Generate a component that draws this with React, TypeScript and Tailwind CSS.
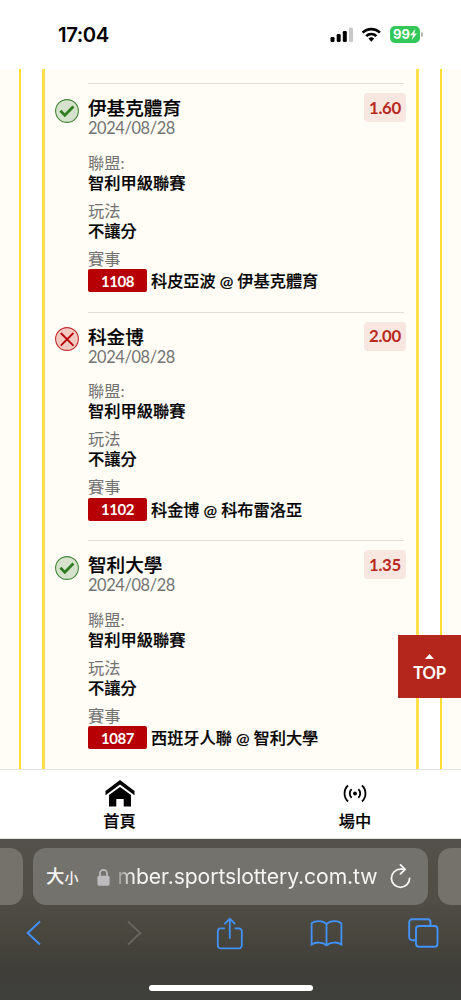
type Bet = {
  id: string;
  team: string;
  odds: string;
  match: [string, string];
  won: boolean;
};

const bets: Bet[] = [
  { id: "1108", team: "伊基克體育", odds: "1.60", match: ["科皮亞波", "伊基克體育"], won: true },
  { id: "1102", team: "科金博", odds: "2.00", match: ["科金博", "科布雷洛亞"], won: false },
  { id: "1087", team: "智利大學", odds: "1.35", match: ["西班牙人聯", "智利大學"], won: true },
];

function StatusBar() {
  return (
    <header className="flex h-[69px] shrink-0 items-start justify-between bg-white pl-[58px] pr-[38px] pt-[21px] font-['Inter',sans-serif]">
      <span className="text-[20.3px] font-semibold leading-[27px] tracking-[-0.4px] text-black">17:04</span>
      <div className="flex items-center pt-[3px]">
        <svg className="h-[20px] w-[24px]" viewBox="0 0 24 20">
          <rect x="0.5" y="13" width="4" height="5" rx="1.2" />
          <rect x="6.7" y="10" width="4" height="8" rx="1.2" />
          <rect x="12.8" y="7" width="4" height="11" rx="1.2" />
          <rect x="19" y="3.5" width="4" height="14.5" rx="1.2" fill="#c8c8c8" />
        </svg>
        <svg className="ml-[7px] h-[20px] w-[21px]" viewBox="0 0 21 20" fill="none" stroke="#000" strokeWidth="2.7">
          <path d="M1.7 8.6a12.3 12.3 0 0 1 17.2 0" />
          <path d="M5.2 12.1a7.3 7.3 0 0 1 10.2 0" />
          <path d="M7.4 14.6a4.2 4.2 0 0 1 5.8 0L10.3 17.7Z" fill="#000" stroke="none" />
        </svg>
        <div className="ml-[8px] flex h-[17px] w-[30px] items-center justify-center rounded-[5px] bg-[#34c759] text-[13px] font-bold leading-none text-white">
          99
          <svg className="h-[11px] w-[7px]" viewBox="0 0 7 11" fill="#fff">
            <path d="M5.5 0 0 6.2h3L1.7 11 7 4.5H4.2Z" />
          </svg>
        </div>
        <span className="ml-px h-[5px] w-[2px] rounded-r-full bg-[#b5b5b5]" />
      </div>
    </header>
  );
}

function ResultIcon({ won }: { won: boolean }) {
  return won ? (
    <svg className="h-6 w-6" viewBox="0 0 24 24" fill="none">
      <circle cx="12" cy="12" r="11.4" fill="#d6e3cc" stroke="#43853a" strokeWidth="1.1" />
      <path d="m5.4 11.8 4.4 4.4 8.6-8.8" stroke="#2f7d20" strokeWidth="2.8" />
    </svg>
  ) : (
    <svg className="h-6 w-6" viewBox="0 0 24 24" fill="none">
      <circle cx="12" cy="12" r="11.4" fill="#f3c9c2" stroke="#c22a2c" strokeWidth="1.1" />
      <path d="m5.8 6 12.6 12.6M18.4 6 5.8 18.6" stroke="#b90004" strokeWidth="1.8" />
    </svg>
  );
}

function BetItem({ bet }: { bet: Bet }) {
  return (
    <article className="flex h-[228.6px] shrink-0">
      <div className="w-[43px] shrink-0 pl-[10px] pt-[15.5px]">
        <ResultIcon won={bet.won} />
      </div>
      <div className="relative w-[316px] border-t border-[#e3e0dc] pt-[14px] text-[16.25px] leading-[20px] text-[#737373]">
        <h2 className="text-[18.6px] font-medium leading-[20px] text-black [-webkit-text-stroke:0.2px_black]">{bet.team}</h2>
        <p className="text-[16.4px] leading-[20px] tracking-[-0.4px]">2024/08/28</p>
        <dl>
          <dt className="mt-[14.5px]">聯盟:</dt>
          <dd className="font-medium text-black [-webkit-text-stroke:0.2px_black]">智利甲級聯賽</dd>
          <dt className="mt-[8px]">玩法</dt>
          <dd className="font-medium text-black [-webkit-text-stroke:0.2px_black]">不讓分</dd>
          <dt className="mt-[8px]">賽事</dt>
          <dd className="mt-[0.5px] flex items-center font-medium text-black">
            <span className="flex h-[23px] w-[59px] items-center justify-center rounded-[2px] bg-[#b60004] text-[15px] font-bold tracking-[-0.4px] text-white">
              {bet.id}
            </span>
            <span className="ml-[4px] mt-px flex gap-[4px] whitespace-nowrap text-[16.2px] [-webkit-text-stroke:0.2px_black]">
              <span>{bet.match[0]}</span>
              <span>@</span>
              <span>{bet.match[1]}</span>
            </span>
          </dd>
        </dl>
        <span className="absolute right-[-2px] top-[9px] flex h-[29px] w-[42px] items-center justify-center rounded-[4px] bg-[#f8e7e0] text-[16.8px] font-bold tracking-[-0.3px] text-[#b8291f]">
          {bet.odds}
        </span>
      </div>
    </article>
  );
}

function TabBar() {
  return (
    <nav className="flex h-[70px] shrink-0 overflow-hidden border-b border-t border-[#e3e3e3] bg-white text-[16.2px] font-medium leading-[20px] text-black [-webkit-text-stroke:0.2px_black]">
      <div className="flex w-[239px] shrink-0 flex-col items-center pt-[10px]">
        <svg className="h-[27px] w-[30px]" viewBox="0 0 30 27">
          <path d="M15 0 29.5 11v4.3L15 4.5.5 15.3V11Z" />
          <path d="M15 7 26 15v11.5h-7.3V19h-7.4v7.5H4V15Z" />
        </svg>
        <span className="mt-[4px]">首頁</span>
      </div>
      <div className="flex w-[232px] shrink-0 flex-col items-center pt-[14px]">
        <svg className="h-[19px] w-[24px]" viewBox="0 0 24 19" fill="none" stroke="#000" strokeWidth="1.8">
          <circle cx="12" cy="9.5" r="1.9" fill="#000" stroke="none" />
          <path d="M8.6 5.2a6 6 0 0 0 0 8.6M15.4 5.2a6 6 0 0 1 0 8.6M5 1.5a11 11 0 0 0 0 16M19 1.5a11 11 0 0 1 0 16" />
        </svg>
        <span className="mt-[8px]">場中</span>
      </div>
    </nav>
  );
}

function BrowserBar() {
  return (
    <footer className="flex h-[161px] shrink-0 flex-col bg-[linear-gradient(180deg,#53514b_0%,#504e46_35%,#48463d_60%,#3f3e39_80%,#3f3f3c_100%)] pt-[9px]">
      <div className="flex h-[57px] justify-between text-[#f5f5f4]">
        <div className="w-[23px] rounded-r-[13px] bg-[#74726b]" />
        <div className="flex w-[395px] items-center rounded-[13px] bg-[#73726c]">
          <span className="ml-[13px] flex shrink-0 items-baseline font-medium leading-none">
            <span className="text-[18.5px]">大</span>
            <span className="text-[14px]">小</span>
          </span>
          <svg className="ml-[18px] h-[18px] w-[13px] shrink-0" viewBox="0 0 13 18">
            <path d="M3 9V5.3a3.5 3.5 0 0 1 7 0V9" fill="none" stroke="#bcbbbd" strokeWidth="1.7" />
            <rect x="0.4" y="7.7" width="12.2" height="10" rx="1.8" fill="#bcbbbd" />
          </svg>
          <span className="ml-[8px] mt-px w-[260px] shrink-0 whitespace-nowrap font-['Inter',sans-serif] text-[21.2px] tracking-[-0.1px] [mask-image:linear-gradient(90deg,rgba(0,0,0,0.3),#000_16px)]">
            mber.sportslottery.com.tw
          </span>
          <svg className="ml-[12px] h-[25px] w-[21px] shrink-0" viewBox="0 0 21 25" fill="none" stroke="#f5f5f4" strokeWidth="1.8" strokeLinecap="round" strokeLinejoin="round">
            <path d="M14.3 5.2H10.5a9.1 9.1 0 1 0 9.1 9.1" />
            <path d="m10.5 0.9 4.6 4.4-4.6 4.6" />
          </svg>
        </div>
        <div className="w-[23px] rounded-l-[13px] bg-[#74726b]" />
      </div>
      <div className="flex h-[56px] items-center">
        <svg className="ml-[26px] h-[26px] w-[15px]" viewBox="0 0 15 26" fill="none" stroke="#4292fa" strokeWidth="2">
          <path d="M14 1.5 1.7 13 14 24.5" />
        </svg>
        <svg className="ml-[86px] h-[26px] w-[15px]" viewBox="0 0 15 26" fill="none" stroke="#68665f" strokeWidth="1.8">
          <path d="m1 1.5 12.3 11.5L1 24.5" />
        </svg>
        <svg className="ml-[74px] h-[33px] w-[27px]" viewBox="0 0 27 33" fill="none" stroke="#4292fa" strokeWidth="1.8">
          <path d="M9 11.3H4.8a3 3 0 0 0-3 3V28.4a3 3 0 0 0 3 3h18a3 3 0 0 0 3-3V14.3a3 3 0 0 0-3-3H18.6M13.8 21.7V2M8.5 7l5.3-5.3L19.1 7" />
        </svg>
        <svg className="ml-[67px] h-[27px] w-[33px]" viewBox="0 0 33 27" fill="none" stroke="#4292fa" strokeWidth="1.8">
          <path d="M16.5 4.2C13 .5 5.4.1 1.6 3.3v21.2c4-2.8 11.1-2.7 14.9.8 3.8-3.5 10.9-3.6 14.9-.8V3.3C27.6.1 20 .5 16.5 4.2ZM16.5 4.2v21.5" />
        </svg>
        <svg className="ml-[65px] h-[30px] w-[31px]" viewBox="0 0 31 30" fill="none" stroke="#4292fa" strokeWidth="1.9">
          <path d="M8 22.3H4.2a3 3 0 0 1-3-3V4.2a3 3 0 0 1 3-3h15.3a3 3 0 0 1 3 3V8" />
          <rect x="8" y="8" width="21.5" height="20.8" rx="3" />
        </svg>
      </div>
      <div className="ml-[149px] mt-[24px] h-[6px] w-[164px] rounded-full bg-white" />
    </footer>
  );
}

export default function App() {
  return (
    <div className="flex h-[1000px] w-[461px] flex-col overflow-hidden bg-white font-['Lato','Noto_Sans_CJK_TC',sans-serif]">
      <StatusBar />
      <main className="relative flex h-[700px] shrink-0 justify-between overflow-hidden">
        <div className="w-[21px] border-r-2 border-[#ffdc32] bg-[#fffdf5]" />
        <section className="flex w-[377px] flex-col border-x-[3px] border-[#ffdf4a] bg-[#fffdf5] pt-[14px]">
          {bets.map((bet) => (
            <BetItem key={bet.id} bet={bet} />
          ))}
        </section>
        <div className="w-[21px] border-l-2 border-[#ffdc32] bg-[#fffdf5]" />
        <button className="absolute right-0 top-[566px] flex h-[63px] w-[63px] flex-col items-center bg-[#b4261c] pt-[19px] text-white">
          <svg className="h-[5px] w-[9px]" viewBox="0 0 9 5" fill="#fff">
            <path d="M4.5 0 9 5H0Z" />
          </svg>
          <span className="mt-[4px] text-[16.6px] font-bold leading-[20px] tracking-[-0.2px]">TOP</span>
        </button>
      </main>
      <TabBar />
      <BrowserBar />
    </div>
  );
}
